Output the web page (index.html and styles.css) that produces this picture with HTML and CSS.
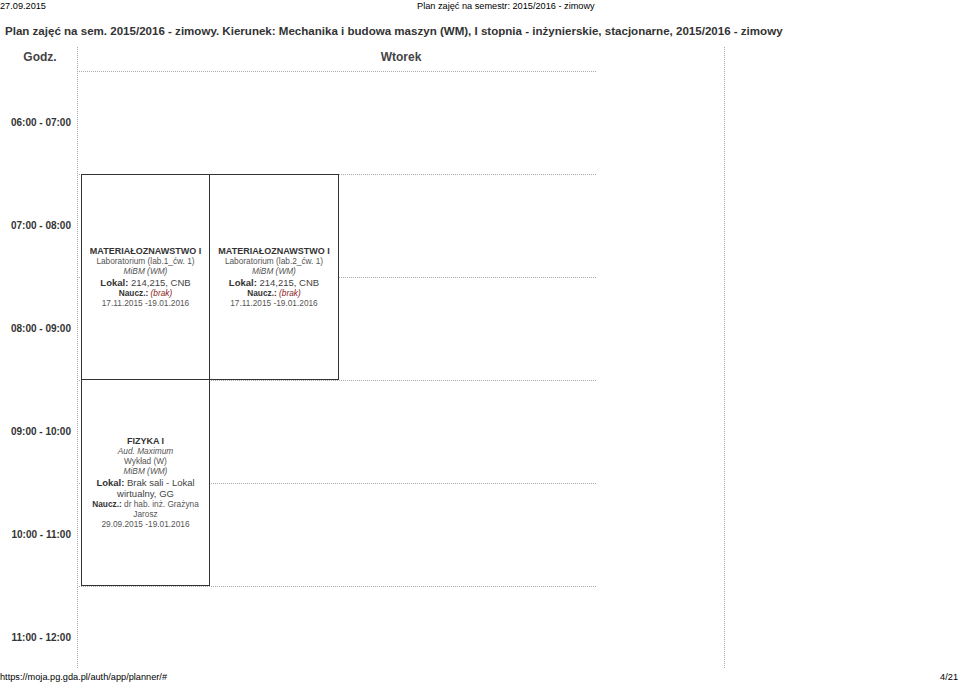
FILE: index.html
```html
<!DOCTYPE html>
<html lang="pl">
<head>
<meta charset="utf-8">
<title>Plan zajęć na semestr: 2015/2016 - zimowy</title>
<link rel="stylesheet" href="styles.css">
</head>
<body>
<div class="print-top">
  <span class="pt-date">27.09.2015</span>
  <span class="pt-title">Plan zajęć na semestr: 2015/2016 - zimowy</span>
</div>
<h1 class="title">Plan zajęć na sem. 2015/2016 - zimowy. Kierunek: Mechanika i budowa maszyn (WM), I stopnia - inżynierskie, stacjonarne, 2015/2016 - zimowy</h1>
<div class="tt">
  <div class="hours">
    <div class="hhead">Godz.</div>
    <div class="hour">06:00 - 07:00</div>
    <div class="hour">07:00 - 08:00</div>
    <div class="hour">08:00 - 09:00</div>
    <div class="hour">09:00 - 10:00</div>
    <div class="hour">10:00 - 11:00</div>
    <div class="hour">11:00 - 12:00</div>
  </div>
  <div class="day">
    <div class="dhead">Wtorek</div>
    <div class="grid">
      <div class="line r1"></div>
      <div class="line r2"></div>
      <div class="line r3"></div>
      <div class="line r4"></div>
      <div class="line r5"></div>
      <div class="line r6"></div>
      <div class="ev ev1">
        <div class="ev-name">MATERIAŁOZNAWSTWO I</div>
        <div>Laboratorium (lab.1_ćw. 1)</div>
        <div class="it">MiBM (WM)</div>
        <div class="lok"><b>Lokal:</b> 214,215, CNB</div>
        <div><b>Naucz.:</b> <span class="brak">(brak)</span></div>
        <div>17.11.2015 -19.01.2016</div>
      </div>
      <div class="ev ev2">
        <div class="ev-name">MATERIAŁOZNAWSTWO I</div>
        <div>Laboratorium (lab.2_ćw. 1)</div>
        <div class="it">MiBM (WM)</div>
        <div class="lok"><b>Lokal:</b> 214,215, CNB</div>
        <div><b>Naucz.:</b> <span class="brak">(brak)</span></div>
        <div>17.11.2015 -19.01.2016</div>
      </div>
      <div class="ev ev3">
        <div class="ev-name">FIZYKA I</div>
        <div class="it">Aud. Maximum</div>
        <div>Wykład (W)</div>
        <div class="it">MiBM (WM)</div>
        <div class="lok"><b>Lokal:</b> Brak sali - Lokal<br>wirtualny, GG</div>
        <div><b>Naucz.:</b> dr hab. inż. Grażyna<br>Jarosz</div>
        <div>29.09.2015 -19.01.2016</div>
      </div>
    </div>
  </div>
</div>
<div class="print-bottom">
  <span>https://moja.pg.gda.pl/auth/app/planner/#</span>
  <span>4/21</span>
</div>
</body>
</html>
```
FILE: styles.css
```css
html, body {
  margin: 0;
  padding: 0;
}
body {
  width: 959px;
  height: 687px;
  overflow: hidden;
  background: #fff;
  font-family: "Liberation Sans", Arial, sans-serif;
  color: #333;
}
.print-top {
  display: grid;
  grid-template-columns: 417px auto;
  height: 13px;
  line-height: 13px;
  font-size: 9.2px;
  color: #000;
}
.title {
  margin: 9px 0 0 5px;
  font-size: 11.55px;
  line-height: 18px;
  font-weight: bold;
  color: #333;
  white-space: nowrap;
}
.tt {
  display: flex;
  margin-top: 7px;
  height: 621px;
  overflow: hidden;
}
.hours {
  width: 77px;
  flex: none;
  border-right: 1px dotted #aaa;
}
.hhead, .dhead {
  height: 23px;
  line-height: 21px;
  padding-bottom: 1px;
  text-align: center;
  font-size: 12px;
  font-weight: bold;
  color: #444;
}
.hhead {
  padding-left: 3px;
}
.hour {
  height: 103px;
  display: flex;
  align-items: center;
  justify-content: flex-end;
  padding-right: 6px;
  font-size: 10px;
  font-weight: bold;
  color: #333;
}
.day {
  width: 646px;
  flex: none;
  border-right: 1px dotted #aaa;
}
.grid {
  margin-left: 1px;
  width: 517px;
  display: grid;
  grid-template-columns: 2px 129px 129px 1fr;
  grid-template-rows: repeat(6, 103px);
}
.line {
  grid-column: 1 / -1;
  border-top: 1px dotted #aaa;
}
.r1 { grid-row: 1; }
.r2 { grid-row: 2; }
.r3 { grid-row: 3; }
.r4 { grid-row: 4; }
.r5 { grid-row: 5; }
.r6 { grid-row: 6; }
.ev {
  position: relative;
  z-index: 1;
  background: #fff;
  border: 1px solid #333;
  display: flex;
  flex-direction: column;
  justify-content: center;
  align-items: center;
  text-align: center;
  padding: 0 4px;
  font-size: 8.3px;
  line-height: 10.1px;
  color: #555;
}
.ev1 { grid-column: 2; grid-row: 2 / span 2; }
.ev2 { grid-column: 3; grid-row: 2 / span 2; margin-left: -1px; }
.ev3 { grid-column: 2; grid-row: 4 / span 2; margin-top: -1px; }
.ev-name {
  font-size: 9px;
  font-weight: bold;
  color: #333;
}
.ev b {
  color: #333;
}
.it {
  font-style: italic;
}
.lok {
  font-size: 9.5px;
  line-height: 11px;
  color: #444;
}
.brak {
  font-style: italic;
  color: #8b1c1c;
}
.print-bottom {
  display: flex;
  justify-content: space-between;
  height: 19px;
  line-height: 19px;
  font-size: 9.2px;
  color: #000;
  padding-right: 1px;
}
```
